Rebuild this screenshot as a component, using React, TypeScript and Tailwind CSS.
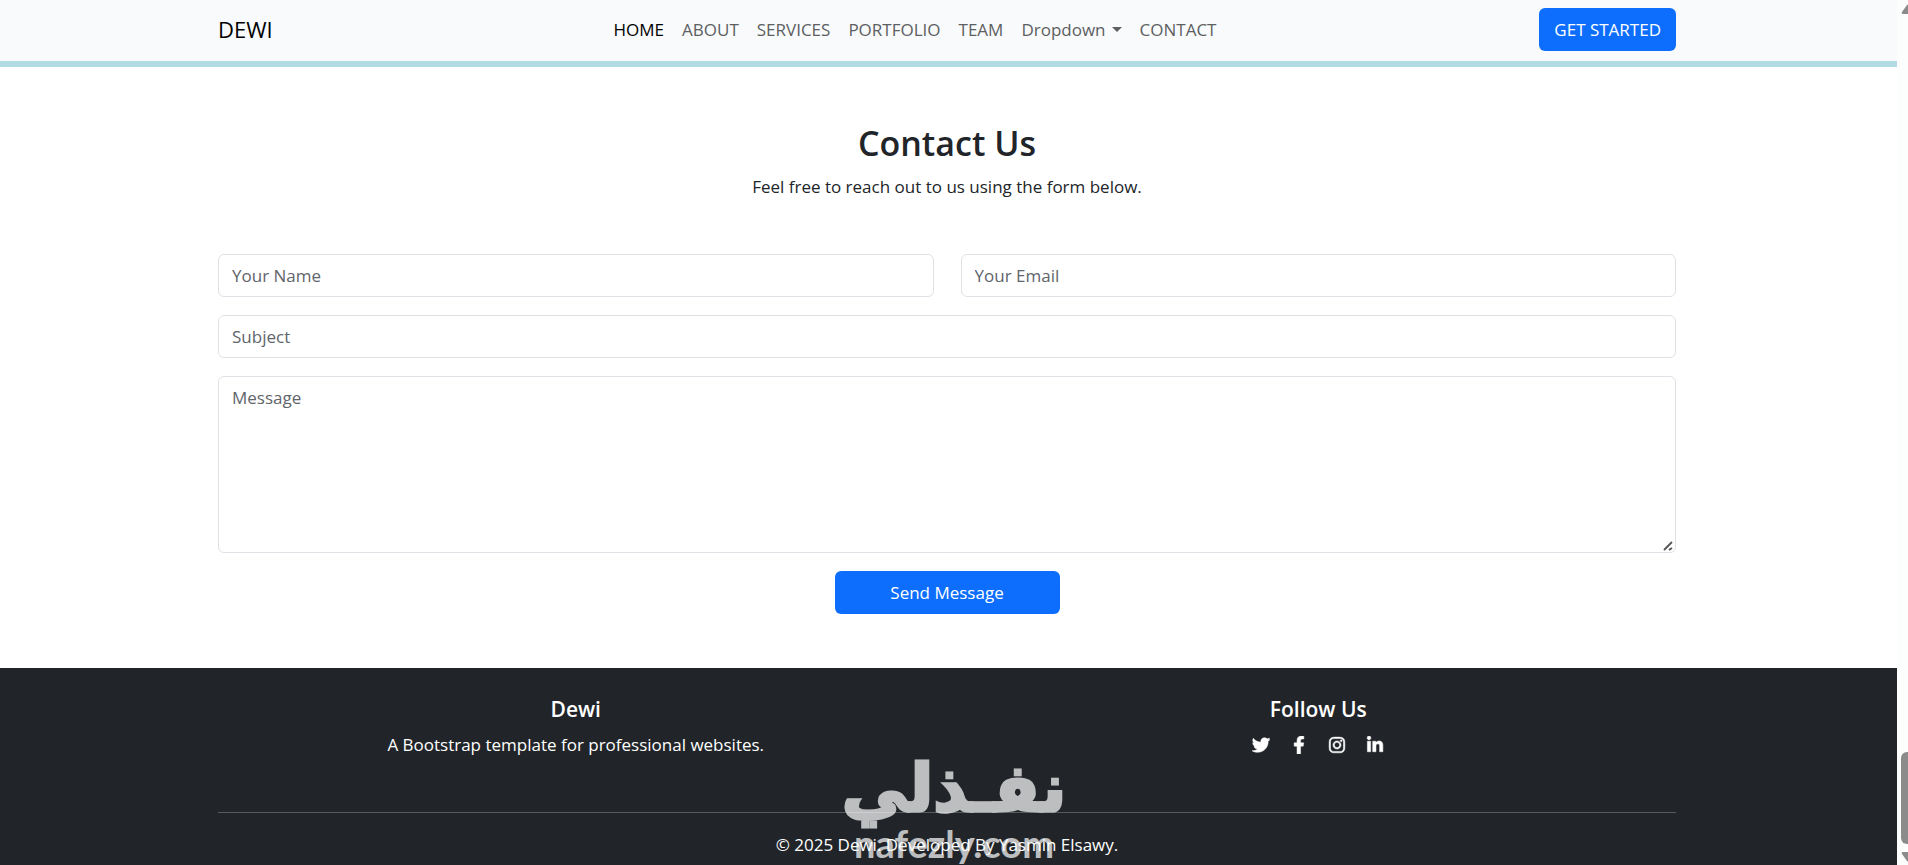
import type { ReactNode } from "react";
import {
  FaFacebookF,
  FaInstagram,
  FaLinkedinIn,
  FaTwitter,
} from "react-icons/fa";

const navLinks = [
  { label: "HOME", href: "#home", active: true },
  { label: "ABOUT", href: "#about" },
  { label: "SERVICES", href: "#services" },
  { label: "PORTFOLIO", href: "#portfolio" },
  { label: "TEAM", href: "#team" },
  { label: "Dropdown", menu: true },
  { label: "CONTACT", href: "#contact" },
];

const socials = [
  { name: "Twitter", Icon: FaTwitter },
  { name: "Facebook", Icon: FaFacebookF },
  { name: "Instagram", Icon: FaInstagram },
  { name: "LinkedIn", Icon: FaLinkedinIn },
];

const field =
  "block w-full rounded-md border border-[#dee2e6] bg-white px-[13px] py-[7px] text-[#212529] placeholder:text-[#5f656b] focus:outline-none focus:border-[#86b7fe]";

function Container({ children }: { children: ReactNode }) {
  return (
    <div className="pr-[3px]">
      <div className="mx-auto w-full max-w-[1458px]">{children}</div>
    </div>
  );
}

function Navbar() {
  return (
    <header className="border-b-6 border-[#b0dbe2] bg-[#f8fafc] pt-2 pb-[10px]">
      <Container>
        <nav className="flex items-center">
          <a href="#home" className="mr-[18px] text-[22px] text-black">
            DEWI
          </a>
          <ul className="mx-auto flex items-center gap-[18px]">
            {navLinks.map((link) => (
              <li key={link.label}>
                {link.menu ? (
                  <button
                    type="button"
                    className="flex items-center gap-1.5 text-[#5d5f61]"
                  >
                    {link.label}
                    <span className="border-x-5 border-t-5 border-x-transparent border-t-current" />
                  </button>
                ) : (
                  <a
                    href={link.href}
                    className={link.active ? "text-black" : "text-[#5d5f61]"}
                  >
                    {link.label}
                  </a>
                )}
              </li>
            ))}
          </ul>
          <a
            href="#contact"
            className="rounded-md bg-[#0d6efd] px-[15px] py-2 text-white"
          >
            GET STARTED
          </a>
        </nav>
      </Container>
    </header>
  );
}

function Contact() {
  return (
    <section id="contact" className="py-[54px]">
      <Container>
        <div className="mb-[54px] text-center text-[#212529]">
          <h2 className="mb-2 text-[34px] leading-[44px] font-semibold">
            Contact Us
          </h2>
          <p>Feel free to reach out to us using the form below.</p>
        </div>
        <form className="flex flex-col gap-[18px]">
          <div className="grid grid-cols-2 gap-[27px]">
            <input
              type="text"
              aria-label="Your Name"
              placeholder="Your Name"
              className={field}
            />
            <input
              type="email"
              aria-label="Your Email"
              placeholder="Your Email"
              className={field}
            />
          </div>
          <input
            type="text"
            aria-label="Subject"
            placeholder="Subject"
            className={field}
          />
          <div className="relative">
            <textarea
              aria-label="Message"
              placeholder="Message"
              className={`${field} h-[177px] resize-none`}
            />
            <svg
              viewBox="0 0 10 10"
              className="pointer-events-none absolute right-[3px] bottom-[2px] h-[10px] w-[10px]"
            >
              <path
                d="M1 9 9 1M6 9 9 7"
                stroke="#555"
                strokeWidth="1.8"
                fill="none"
              />
            </svg>
          </div>
          <button
            type="button"
            className="w-[225px] self-center rounded-md bg-[#0d6efd] py-2 text-white"
          >
            Send Message
          </button>
        </form>
      </Container>
    </section>
  );
}

function Footer() {
  return (
    <footer className="bg-[#212529] py-[27px] text-center text-white">
      <Container>
        <div className="grid grid-cols-2 gap-[27px]">
          <div>
            <h5 className="mb-2 text-[21px] leading-[28px] font-semibold">
              Dewi
            </h5>
            <p>A Bootstrap template for professional websites.</p>
          </div>
          <div>
            <h5 className="mb-2 text-[21px] leading-[28px] font-semibold">
              Follow Us
            </h5>
            <div className="flex h-[27px] items-center justify-center gap-5">
              {socials.map(({ name, Icon }) => (
                <a key={name} href="#" aria-label={name}>
                  <Icon className="h-[18px] w-auto stroke-current stroke-[14]" />
                </a>
              ))}
            </div>
          </div>
        </div>
        <hr className="mt-[54px] mb-[18px] border-[#585b5e]" />
        <p>© 2025 Dewi. Developed By Yasmin Elsawy.</p>
      </Container>
    </footer>
  );
}

function Watermark() {
  return (
    <div className="pointer-events-none absolute inset-x-0 bottom-0 flex flex-col items-center font-bold text-white opacity-70">
      <span
        lang="ar"
        dir="rtl"
        className="font-['DejaVu_Sans'] text-[66px] leading-[66px] [-webkit-text-stroke:3px_white]"
      >
        نفـذلي
      </span>
      <span className="font-[Lato] text-[38px] leading-[43px]">
        nafezly.com
      </span>
    </div>
  );
}

function Scrollbar() {
  return (
    <div className="flex w-[11px] shrink-0 flex-col items-start overflow-hidden bg-[#fcfdfd] pl-1 text-[#8b8b8b]">
      <svg viewBox="0 0 14 10" className="mt-1 h-[10px] w-[14px] shrink-0">
        <path d="M6 1Q7 0 8 1L13 8Q13 10 12 10H2Q0 10 1 8Z" fill="currentColor" />
      </svg>
      <div className="mt-auto h-[92px] w-[14px] shrink-0 rounded-md bg-current" />
      <svg
        viewBox="0 0 14 10"
        className="mt-2 mb-[3px] h-[10px] w-[14px] shrink-0"
      >
        <path d="M6 9Q7 10 8 9L13 2Q13 0 12 0H2Q0 0 1 2Z" fill="currentColor" />
      </svg>
    </div>
  );
}

export default function App() {
  return (
    <div className="relative flex h-screen overflow-hidden bg-white font-['Open_Sans',sans-serif] text-[17px] leading-[27px]">
      <div className="min-w-0 flex-1 overflow-hidden">
        <Navbar />
        <Contact />
        <Footer />
      </div>
      <Scrollbar />
      <Watermark />
    </div>
  );
}
